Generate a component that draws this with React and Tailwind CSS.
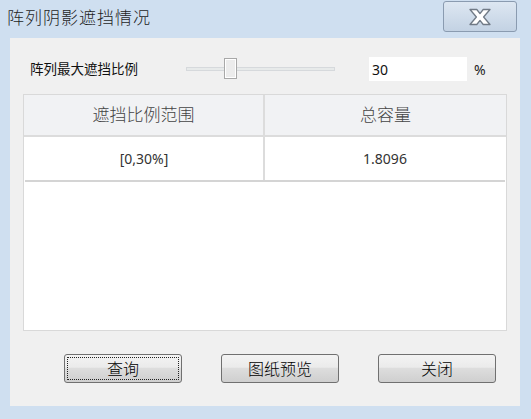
const FONT = "font-['Noto_Sans','Noto_Sans_CJK_SC',sans-serif]"

const ROWS = [{ range: '[0,30%]', capacity: '1.8096' }]

function CloseButton() {
  return (
    <button
      type="button"
      className="mt-[1px] mr-[14px] flex h-[31px] w-[74px] items-center justify-center self-start rounded-[3px] border border-[#8a9bb0] bg-gradient-to-b from-[#dde7f2] to-[#c3d2e3]"
    >
      <svg width="24" height="18" viewBox="0 0 24 18">
        <path
          d="M2 1.5 L8.8 1.5 L12 5.6 L15.2 1.5 L22 1.5 L15.6 9 L22 16.5 L15.2 16.5 L12 12.4 L8.8 16.5 L2 16.5 L8.4 9 Z"
          fill="#ffffff"
          stroke="#707a86"
          strokeWidth="1.3"
          strokeLinejoin="round"
        />
      </svg>
    </button>
  )
}

function Slider({ value }) {
  return (
    <div className="relative h-[22px] w-[149px]">
      <div className="absolute top-[9px] left-0 h-[4px] w-full border border-[#d6d9dc] bg-[#e7eaea]" />
      <div
        className="absolute top-0 h-[21px] w-[13px] border border-[#a8a8a8] bg-[#ececec] shadow-[inset_0_0_0_1px_#ffffff]"
        style={{ left: `${(value / 100) * 126}px` }}
      />
    </div>
  )
}

function DialogButton({ label, focused }) {
  return (
    <button
      type="button"
      className="relative h-[29px] w-[118px] rounded-[3px] border border-[#707070] bg-[linear-gradient(to_bottom,#f3f3f3_0%,#ebebeb_45%,#dddddd_50%,#cfcfcf_100%)] text-[16px] font-light text-black"
    >
      {focused && (
        <span className="absolute inset-[2px] rounded-[1px] border border-dotted border-[#222]" />
      )}
      <span className="relative">{label}</span>
    </button>
  )
}

export default function App() {
  return (
    <div className={`flex h-[419px] w-[531px] flex-col bg-[#cfdff0] ${FONT}`}>
      <div className="flex h-[38px] items-start justify-between">
        <span className="pt-[6px] pl-[7px] text-[17px] leading-[24px] font-light tracking-[1px] text-[#1e1e1e]">
          阵列阴影遮挡情况
        </span>
        <CloseButton />
      </div>

      <div className="ml-[10px] flex h-[368px] w-[510px] flex-col bg-[#f0f0f0]">
        <div className="mt-[19px] flex h-[24px] items-center">
          <span className="ml-[20px] w-[156px] text-[13.5px] text-[#111]">阵列最大遮挡比例</span>
          <Slider value={30} />
          <div className="ml-[34px] flex h-[24px] w-[98px] items-center bg-white pl-[3px] text-[14px] text-[#111]">
            30
          </div>
          <span className="ml-[7px] text-[14px] text-[#222]">%</span>
        </div>

        <div className="mt-[13px] ml-[13px] flex h-[237px] w-[484px] flex-col border border-[#d9d9d9] bg-white">
          <div className="grid h-[42px] grid-cols-[241px_1fr] border-b-2 border-[#dcdcdc] bg-[#f1f2f4] text-[17px] font-light text-[#444]">
            <div className="flex items-center justify-center border-r-2 border-[#dcdcdc]">遮挡比例范围</div>
            <div className="flex items-center justify-center">总容量</div>
          </div>
          {ROWS.map((row) => (
            <div
              key={row.range}
              className="mx-[1px] grid h-[45px] grid-cols-[240px_1fr] border-b-2 border-[#d4d4d4] text-[14px] text-[#333]"
            >
              <div className="flex items-center justify-center border-r-2 border-[#dcdcdc]">{row.range}</div>
              <div className="flex items-center justify-center">{row.capacity}</div>
            </div>
          ))}
        </div>

        <div className="mt-[23px] ml-[54px] flex gap-[39px]">
          <DialogButton label="查询" focused />
          <DialogButton label="图纸预览" />
          <DialogButton label="关闭" />
        </div>
      </div>
    </div>
  )
}
